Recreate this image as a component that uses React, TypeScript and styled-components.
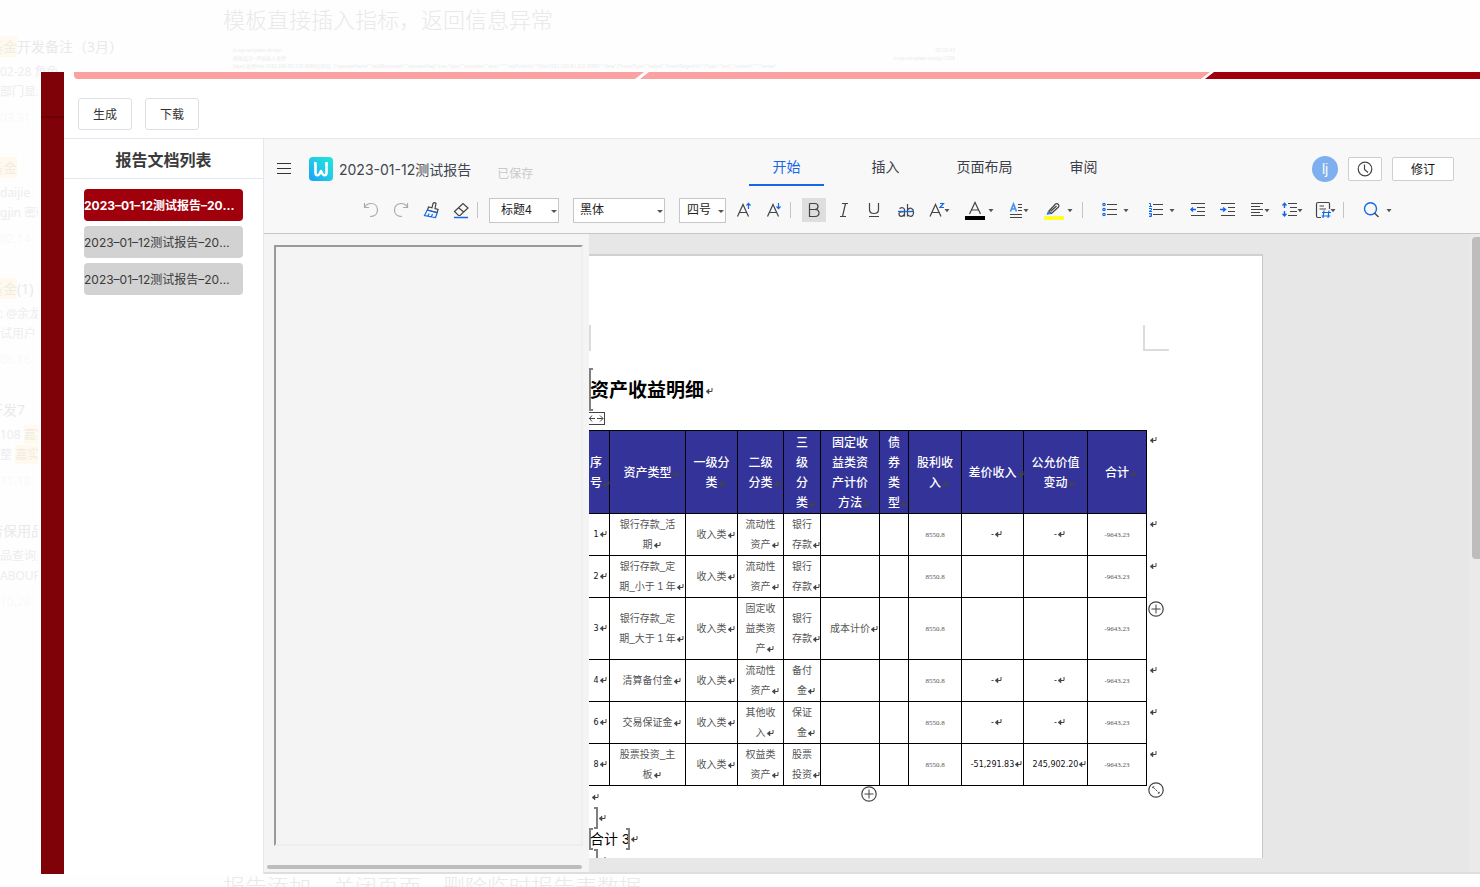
import React from 'react';
import styled, { createGlobalStyle, css } from 'styled-components';

const CJK = '"Noto Sans CJK SC"';
const INK = '#444';
const BLUE = '#1567e8';

const GlobalStyle = createGlobalStyle`
  *, *::before, *::after { box-sizing: border-box; }
  html, body { margin: 0; padding: 0; }
  body {
    background: #fefefe;
    color: #333;
    font-family: "Liberation Sans", ${CJK}, sans-serif;
    font-size: 12px;
  }
  button, select { font: inherit; color: inherit; margin: 0; padding: 0; }
  h1, h2, h3, p, ul { margin: 0; padding: 0; font-weight: normal; }
  ul { list-style: none; }
  svg { display: block; }
`;

/* ---------- notes app behind the window ---------- */

const Desktop = styled.div`
  position: relative;
  display: flex;
  height: 100vh;
  overflow: hidden;
`;

const NoteList = styled.ul`
  width: 173px;
  padding-top: 37px;
  font-family: "Noto Sans", ${CJK}, sans-serif;
  color: #ededf0;
  white-space: nowrap;
`;

const Note = styled.li`
  margin-bottom: 30px;
  line-height: 20px;
`;

const NoteTitle = styled.h3`
  margin-bottom: 5px;
  font-size: 14px;
  text-indent: -11px;
  color: #e9e9ec;
`;

const NoteDate = styled.p`
  margin-top: 6px;
  color: #f9f9fb;
`;

const Hit = styled.mark`
  padding: 1px 0;
  background: #fff9ee;
  color: #f0ece6;
`;

const NoteBody = styled.main`
  flex: 1;
  display: flex;
  flex-direction: column;
  justify-content: space-between;
  padding-left: 50px;
  white-space: nowrap;
`;

const NoteHeading = styled.h2`
  font-size: 22px;
  line-height: 28px;
  padding-top: 7px;
  font-weight: 300;
  color: #e9e9e9;
`;

const NotePreview = styled.div`
  width: 732px;
  padding: 11px 0 0 10px;
  overflow: hidden;
  font-size: 5px;
  line-height: 8px;
  color: #ececec;
`;

const PreviewLine = styled.p`
  display: flex;
  justify-content: space-between;
`;

const NoteFooting = styled(NoteHeading)`
  padding: 0;
  margin-bottom: -15px;
`;

/* ---------- report window ---------- */

const Window = styled.div`
  position: absolute;
  inset: 72px 0 13px 38px;
  display: flex;
  border-left: 3px solid #fff;
  background: #fff;
`;

const Rail = styled.div`
  width: 23px;
  background: #7f0208;
  border-top: 44px solid #7f0208;
  box-shadow: inset 0 2px 0 #6a0006;
`;

const Shell = styled.div`
  flex: 1;
  min-width: 0;
  display: flex;
  flex-direction: column;
`;

const Steps = styled.div`
  display: flex;
  height: 7px;
  padding-left: 10px;
`;

const Step = styled.div<{ $kind: 'first' | 'middle' | 'last' }>`
  ${({ $kind }) =>
    $kind === 'first'
      ? css`
          flex: 0 0 570px;
          border-bottom-left-radius: 4px;
          background: #fba1a1;
          clip-path: polygon(0 0, 100% 0, calc(100% - 9px) 100%, 0 100%);
        `
      : $kind === 'middle'
      ? css`
          flex: 0 0 570px;
          margin-left: -4px;
          background: #fba1a1;
          clip-path: polygon(9px 0, 100% 0, calc(100% - 9px) 100%, 0 100%);
        `
      : css`
          flex: 1;
          margin-left: -5px;
          background: #a0000b;
          clip-path: polygon(9px 0, 100% 0, 100% 100%, 0 100%);
        `}
`;

const Actions = styled.div`
  display: flex;
  gap: 13px;
  padding: 19px 14px 8px;
  border-bottom: 1px solid #e6e6f0;
`;

const ActionButton = styled.button`
  width: 54px;
  height: 32px;
  padding-bottom: 2px;
  border: 1px solid #dedfe3;
  border-radius: 3px;
  background: #fff;
  color: #333;
`;

const Work = styled.div`
  flex: 1;
  min-height: 0;
  display: flex;
`;

const Sidebar = styled.nav`
  width: 200px;
  flex: none;
  border-right: 1px solid #e6e6f0;
`;

const SidebarTitle = styled.h2`
  height: 40px;
  line-height: 43px;
  border-bottom: 1px solid #e6e6f0;
  text-align: center;
  font-size: 16px;
  font-weight: 700;
  color: #3a3a3a;
`;

const Docs = styled.ul`
  display: flex;
  flex-direction: column;
  gap: 5px;
  padding: 10px 20px;
`;

const DocButton = styled.button<{ $active?: boolean }>`
  display: block;
  width: 159px;
  height: 32px;
  padding: 0 7px 2px 0;
  overflow: hidden;
  text-overflow: ellipsis;
  white-space: nowrap;
  text-align: left;
  border: 0;
  border-radius: 4px;
  font-family: Inter, ${CJK}, sans-serif;
  font-weight: ${({ $active }) => ($active ? 700 : 400)};
  background: ${({ $active }) => ($active ? '#a0000b' : '#d2d2d2')};
  color: ${({ $active }) => ($active ? '#fff' : '#3a3a3a')};
`;

/* ---------- editor ---------- */

const Editor = styled.section`
  flex: 1;
  min-width: 0;
  display: flex;
  flex-direction: column;
  border-bottom: 2px solid #dedede;
  background: #e5e5e5;
`;

const EditorHead = styled.header`
  height: 95px;
  flex: none;
  border-bottom: 1px solid #c6c6c6;
  background: #f8f8f8;
`;

const TitleRow = styled.div`
  display: flex;
  align-items: center;
  height: 59px;
  padding-right: 26px;
`;

const TitleGroup = styled.div`
  width: 485px;
  display: flex;
  align-items: center;
  padding-left: 13px;
`;

const MenuButton = styled.button`
  width: 14px;
  height: 14px;
  margin-right: 18px;
  border: 0;
  background: none;
`;

const DocTitle = styled.h1`
  margin: 0 26px 0 6px;
  padding-top: 2px;
  font-family: Inter, ${CJK}, sans-serif;
  font-size: 14px;
  line-height: 20px;
  color: #40454f;
`;

const Saved = styled.span`
  padding-top: 8px;
  color: #c9c9c9;
`;

const Tabs = styled.nav`
  display: flex;
  gap: 24px;
  align-self: flex-start;
`;

const Tab = styled.button<{ $active?: boolean }>`
  width: 75px;
  height: 47px;
  padding-top: 8px;
  border: 0;
  border-bottom: 2px solid ${({ $active }) => ($active ? BLUE : 'transparent')};
  background: none;
  font-size: 14px;
  color: ${({ $active }) => ($active ? BLUE : '#3c4048')};
`;

const UserGroup = styled.div`
  margin-left: auto;
  display: flex;
  align-items: center;
  gap: 10px;
`;

const Avatar = styled.span`
  width: 26px;
  height: 26px;
  border-radius: 50%;
  background: #7eafee;
  color: #fff;
  font-size: 14px;
  line-height: 26px;
  text-align: center;
`;

const HeadButton = styled.button<{ $w: number }>`
  display: flex;
  align-items: center;
  justify-content: center;
  width: ${({ $w }) => $w}px;
  height: 24px;
  border: 1px solid #cfcfcf;
  border-radius: 2px;
  background: #fff;
  color: #111;
`;

const Ribbon = styled.div`
  display: flex;
  align-items: center;
  height: 24px;
  padding-left: 92px;
`;

const Tool = styled.button<{ $w?: number; $on?: boolean }>`
  flex: none;
  width: ${({ $w = 24 }) => $w}px;
  height: 24px;
  margin: 0 3px;
  border: 0;
  background: ${({ $on }) => ($on ? '#dedede' : 'none')};
`;

const Divider = styled.span`
  flex: none;
  width: 1px;
  height: 16px;
  margin: 0 8px 0 1px;
  background: #c4c4c4;
`;

const Pickers = styled.div`
  display: flex;
  gap: 14px;
  margin: 0 3px;
`;

const Picker = styled.label<{ $w: number }>`
  position: relative;
  flex: none;
  width: ${({ $w }) => $w}px;
  height: 25px;
`;

const PickerSelect = styled.select<{ $pad: number }>`
  appearance: none;
  width: 100%;
  height: 100%;
  padding-left: ${({ $pad }) => $pad}px;
  border: 1px solid #c6c6c6;
  border-radius: 0;
  background: #fff;
  color: #222;
`;

const PickerArrow = styled.span`
  position: absolute;
  right: 2px;
  top: 12px;
  border: 3px solid transparent;
  border-top-color: #555;
  pointer-events: none;
`;

/* ---------- document area ---------- */

const Body = styled.div`
  flex: 1;
  min-height: 0;
  display: flex;
  background: #e7e7e7;
`;

const Outline = styled.aside`
  width: 325px;
  flex: none;
  display: flex;
  flex-direction: column;
  gap: 19px;
  padding: 11px 6px 3px 3px;
  background: #f4f4f4;
`;

const OutlineFrame = styled.div`
  flex: 1;
  margin-left: 7px;
  border: 2px solid;
  border-color: #9a9a9a #eee #eee #9a9a9a;
`;

const HorizontalThumb = styled.div`
  height: 4px;
  width: 315px;
  border-radius: 2px;
  background: #bdbdbd;
`;

const Canvas = styled.div`
  flex: 1;
  min-width: 0;
  margin-bottom: 14px;
  padding-top: 20px;
  overflow: hidden;
`;

const VerticalTrack = styled.div`
  width: 10px;
  flex: none;
  padding: 3px 0 0 2px;
  background: #eaeaea;
`;

const VerticalThumb = styled.div`
  height: 322px;
  border-radius: 4px 0 0 4px;
  background: #bdbdbd;
`;

const Sheet = styled.article`
  width: 674px;
  height: 900px;
  padding-top: 69px;
  border-top: 2px solid #d0d0d0;
  border-right: 1px solid #c6c6c6;
  background: #fff;
  color: #000;
`;

const Corners = styled.div`
  display: flex;
  justify-content: space-between;
  width: 580px;
  height: 26px;
`;

const Corner = styled.span<{ $right?: boolean }>`
  width: ${({ $right }) => ($right ? 26 : 2)}px;
  border-left: 2px solid #dcdcdc;
  border-bottom: ${({ $right }) => ($right ? '2px solid #dcdcdc' : '0')};
`;

const Heading = styled.h2`
  display: flex;
  align-items: center;
  gap: 1px;
  height: 43px;
  margin-top: 17px;
  font-size: 19px;
  font-weight: 700;

  svg { margin-top: 4px; }
`;

const Bracket = styled.span<{ $side: 'left' | 'right'; $h: number }>`
  flex: none;
  width: 4px;
  height: ${({ $h }) => $h}px;
  border: 2px solid #808080;
  border-${({ $side }) => ($side === 'left' ? 'right' : 'left')}: 0;
`;

const HeadingText = styled.span`
  margin-left: -4px;
  padding-bottom: 2px;
`;

const WidthHandle = styled.button`
  display: block;
  width: 16px;
  height: 13px;
  margin: 1px 0 5px;
  border: 1px solid #444;
  border-left: 0;
  background: #fff;
`;

const TableBox = styled.div`
  position: relative;
`;

const Table = styled.table`
  table-layout: fixed;
  width: 579px;
  border-collapse: separate;
  border-spacing: 0;
  font-size: 10px;
  line-height: 20px;
  text-align: center;
  color: #555;
`;

const cell = css<{ $first?: boolean }>`
  padding: 1px ${({ $first }) => ($first ? 6 : 0)}px 0 0;
  border-right: 1px solid #000;
  border-bottom: 1px solid #000;
  white-space: nowrap;
  overflow: visible;
`;

const Th = styled.th<{ $first?: boolean }>`
  ${cell}
  padding-top: 2px;
  border-top: 1px solid #000;
  background: #333399;
  color: #fff;
  font-size: 12px;
  font-weight: 500;
`;

const Td = styled.td<{ $first?: boolean; $kind?: 'index' | 'small' | 'amount' }>`
  ${cell}
  ${({ $kind }) =>
    $kind === 'small' &&
    css`
      font-family: "Liberation Serif", serif;
      font-size: 7px;
    `}
  ${({ $kind }) =>
    ($kind === 'index' || $kind === 'amount') &&
    css`
      font-family: "DejaVu Sans", sans-serif;
      font-size: 8px;
      color: #111;
    `}
`;

const RowEnd = styled.td<{ $handle?: boolean }>`
  padding: ${({ $handle }) => ($handle ? '3px 0 0 1px' : '7px 0 0 2px')};
  vertical-align: top;
`;

const MarkBox = styled.span`
  display: inline-block;
  width: 0;
  height: 7px;
  vertical-align: -1px;
`;

const Handle = styled.button`
  display: block;
  width: 16px;
  height: 16px;
  border: 0;
  background: none;
`;

const AddColumn = styled(Handle)`
  position: absolute;
  left: 272px;
  top: 100%;
`;

const ResizeTable = styled(Handle)`
  position: absolute;
  left: 559px;
  top: calc(100% - 4px);
`;

const Line = styled.p<{ $h: number; $pad?: number }>`
  display: flex;
  align-items: center;
  height: ${({ $h }) => $h}px;
  padding-left: ${({ $pad = 0 }) => $pad}px;
  font-size: 14px;
  line-height: 20px;

  svg { margin-top: 2px; }
`;

const TotalText = styled.span`
  margin: 0 -4px 0 -3px;
`;

/* ---------- drawings ---------- */

const ReturnIcon = ({ color = '#444' }: { color?: string }) => (
  <svg width="8" height="7" viewBox="0 0 8 7" fill="none" stroke={color} overflow="visible">
    <path d="M7 0V3.500H3.500" />
    <path d="M1 3.500L4 1V6Z" fill={color} strokeWidth="0.500" />
  </svg>
);

const Mark = ({ color }: { color?: string }) => (
  <MarkBox>
    <ReturnIcon color={color} />
  </MarkBox>
);

const PlusCircle = () => (
  <svg width="16" height="16" viewBox="0 0 16 16" fill="#fff" stroke="#444">
    <circle cx="8" cy="8" r="7.200" strokeWidth="1.200" />
    <path d="M3.500 8H12.500M8 3.500V12.500" />
  </svg>
);

const ResizeCircle = () => (
  <svg width="16" height="16" viewBox="0 0 16 16" fill="#fff" stroke="#444">
    <circle cx="8" cy="8" r="7.200" strokeWidth="1.200" />
    <path d="M5 5L11 11" strokeDasharray="2.500 1" />
    <path d="M4.800 6.200V4.800H6.200M9.800 11.200H11.200V9.800" />
  </svg>
);

const Logo = () => (
  <svg width="24" height="24" viewBox="0 0 24 24" fill="none">
    <defs>
      <linearGradient id="logo" x1="0" y1="1" x2="1" y2="0">
        <stop offset="0" stopColor="#1b9ffb" />
        <stop offset="0.500" stopColor="#1fcbe6" />
        <stop offset="1" stopColor="#22e6d8" />
      </linearGradient>
    </defs>
    <rect width="24" height="24" rx="4" fill="url(#logo)" />
    <path d="M5 6.200H6.500V15.500Q6.500 18.300 8.500 18.300Q10.200 18.300 12 14Q13.800 18.300 15.500 18.300Q17.500 18.300 17.500 15.500V5" stroke="#fff" strokeWidth="2.600" strokeLinejoin="round" />
  </svg>
);

const Art = ({ w = 24, caret, children }: { w?: number; caret?: number; children: React.ReactNode }) => (
  <svg width={w} height="24" viewBox={`0 0 ${w} 24`} fill="none" stroke={INK} strokeWidth="1.200">
    {children}
    {caret !== undefined && <path d={`M${caret - 2.5} 11h5l-2.500 3.200z`} fill="#555" stroke="none" />}
  </svg>
);

const Select = ({ label, value, w, pad }: { label: string; value: string; w: number; pad: number }) => (
  <Picker $w={w}>
    <PickerSelect aria-label={label} defaultValue={value} $pad={pad}>
      <option>{value}</option>
    </PickerSelect>
    <PickerArrow />
  </Picker>
);

const RibbonBar = () => (
  <Ribbon>
    <Tool aria-label="撤销">
      <Art>
        <g stroke="#aaa">
          <path d="M5.500 5V9.500H10" />
          <path d="M5.500 9.500C7 6.500 9.500 5.500 12 5.500C16 5.500 18.500 8.300 18.500 12C18.500 16 15.500 18.500 11 18.500" />
        </g>
      </Art>
    </Tool>
    <Tool aria-label="恢复">
      <Art>
        <g stroke="#aaa">
          <path d="M18.500 5V9.500H14" />
          <path d="M18.500 9.500C17 6.500 14.500 5.500 12 5.500C8 5.500 5.500 8.300 5.500 12C5.500 16 8.500 18.500 13 18.500" />
        </g>
      </Art>
    </Tool>
    <Tool aria-label="格式刷">
      <Art>
        <path d="M8.500 12L9.500 9L13 9.800L14 5.500Q15.500 3.800 17 5.500L16 10.500L19 11.500L18.200 14.500Z" />
        <path d="M8.300 12L18.200 14.800L16.500 19.500L5.500 17.500L8.300 12M9 18L10.200 15.500M12.500 18.500L13.500 16" stroke={BLUE} />
      </Art>
    </Tool>
    <Tool aria-label="清除格式">
      <Art>
        <path d="M5.500 13.500L14 5.500L19 10L11 17.500H9.500ZM9.500 9.700L14.700 14" />
        <path d="M5 19.500H19" stroke={BLUE} strokeWidth="1.500" />
      </Art>
    </Tool>
    <Divider />
    <Pickers>
      <Select label="样式" value="标题4" w={70} pad={11} />
      <Select label="字体" value="黑体" w={92} pad={6} />
      <Select label="字号" value="四号" w={47} pad={7} />
    </Pickers>
    <Tool aria-label="增大字号">
      <Art>
        <path d="M5.500 18.500L11 6.500L16.500 18.500M7.500 14.500H14.500" />
        <path d="M16.500 11V5.500M14.500 7.500L16.500 5.300L18.500 7.500" stroke={BLUE} />
      </Art>
    </Tool>
    <Tool aria-label="减小字号">
      <Art>
        <path d="M5.500 18.500L11 6.500L16.500 18.500M7.500 14.500H14.500" />
        <path d="M16.500 5V10.500M14.500 8.500L16.500 10.700L18.500 8.500" stroke={BLUE} />
      </Art>
    </Tool>
    <Divider />
    <Tool aria-label="加粗" $on>
      <Art>
        <path d="M7.500 5.500H13Q16 5.500 16 8.500Q16 11.500 13 11.500H7.500M13 11.500Q17 11.500 17 15Q17 18.500 13 18.500H7.500V5.500" />
      </Art>
    </Tool>
    <Tool aria-label="倾斜">
      <Art>
        <path d="M10 5.500H16M8 18.500H14M13.500 5.500L10.500 18.500" />
      </Art>
    </Tool>
    <Tool aria-label="下划线">
      <Art>
        <path d="M7.500 5V11.500Q7.500 15.500 12 15.500Q16.500 15.500 16.500 11.500V5M7 18.500H17" />
      </Art>
    </Tool>
    <Tool aria-label="删除线">
      <Art>
        <path d="M7.500 10.500Q11.500 8.500 12.500 11.500V18.500M12.500 13.500Q7 13.500 7 16Q7 18.300 9.500 18.300Q12 18.300 12.500 16M15.500 6V18.500M15.500 12Q17 9.800 19 10.200Q21.500 11 21.500 14.200Q21.500 18.300 18.500 18.300Q16.500 18.300 15.500 16.500" />
        <path d="M6 13.500H22" stroke={BLUE} strokeWidth="1.400" />
      </Art>
    </Tool>
    <Tool aria-label="上标" $w={33}>
      <Art w={33} caret={25}>
        <path d="M8 18.500L13.500 6.500L19 18.500M10 14.500H17" />
        <path d="M18 5.500H21.500L18 9.500H22" stroke={BLUE} />
      </Art>
    </Tool>
    <Tool aria-label="字体颜色" $w={36}>
      <Art w={36} caret={30}>
        <path d="M8.500 16L14 4.500L19.500 16M10.500 12H17.500" />
        <rect x="4" y="18" width="20" height="4" fill="#000" stroke="none" />
      </Art>
    </Tool>
    <Tool aria-label="文字效果" $w={30}>
      <Art w={30} caret={23}>
        <path d="M7.500 13.500L10.500 6L13.500 13.500M8.500 11H12.500" stroke="#4a90f5" strokeWidth="1.700" />
        <path d="M15 6.500H19M15 9.500H19M15 12.500H19M7 16.500H19M7 19.500H19" />
      </Art>
    </Tool>
    <Tool aria-label="突出显示" $w={39}>
      <Art w={39} caret={31}>
        <path d="M9.500 13.500L16.500 6Q18 5 19.500 6.500Q20.500 8 19.500 9L12.500 15.500L9.500 13.500M11.500 13.500L17.500 8" />
        <path d="M9.500 13.500L8.500 16L12 15.500" stroke={BLUE} />
        <rect x="5" y="18" width="20" height="4" fill="#ffff2d" stroke="none" />
      </Art>
    </Tool>
    <Divider />
    <Tool aria-label="项目符号" $w={40}>
      <Art w={40} caret={32}>
        <path d="M13 6.500H23M13 11.500H23M13 16.500H23" />
        <g stroke={BLUE}>
          <circle cx="10" cy="6.500" r="1.200" />
          <circle cx="10" cy="11.500" r="1.200" />
          <circle cx="10" cy="16.500" r="1.200" />
        </g>
      </Art>
    </Tool>
    <Tool aria-label="编号" $w={40}>
      <Art w={40} caret={32}>
        <path d="M13 6.500H23M13 11.500H23M13 16.500H23" />
        <path d="M9 5.500H10.500V8.500M9 8.500H12M9 10.500H11.500V12L9 13.500H12M9 15.500H11.500V18.500H9M9.500 17H11.500" stroke={BLUE} strokeWidth="1" />
      </Art>
    </Tool>
    <Tool aria-label="减少缩进">
      <Art>
        <path d="M5 5.500H19M11 9.500H19M11 13.500H19M5 17.500H19" />
        <path d="M10 11.500H5M7 9.500L5 11.500L7 13.500" stroke={BLUE} strokeWidth="1.500" />
      </Art>
    </Tool>
    <Tool aria-label="增加缩进">
      <Art>
        <path d="M5 5.500H19M12 9.500H19M12 13.500H19M5 17.500H19" />
        <path d="M4 11.500H9M7 9.500L9.500 11.500L7 13.500" stroke={BLUE} strokeWidth="1.500" />
      </Art>
    </Tool>
    <Tool aria-label="对齐方式" $w={26}>
      <Art w={26} caret={21}>
        <path d="M5 5.500H17M5 8.500H14M5 11.500H17M5 14.500H14M5 17.500H17" />
      </Art>
    </Tool>
    <Tool aria-label="行距" $w={28}>
      <Art w={28} caret={22}>
        <path d="M10 5.500H19M12 9.500H19M12 13.500H19M10 17.500H19" />
        <path d="M6.500 5.500V10M4.500 7.500L6.500 5.300L8.500 7.500M6.500 13V17.500M4.500 15.700L6.500 18L8.500 15.700" stroke={BLUE} strokeWidth="1.400" />
      </Art>
    </Tool>
    <Tool aria-label="页码" $w={27}>
      <Art w={27} caret={21}>
        <path d="M9 19.500H6Q4.500 19.500 4.500 18V6Q4.500 4.500 6 4.500H16.500Q17.500 4.500 17.500 6V11M7.500 8H12M7.500 11H14" />
        <path d="M12 12.500L11 20M17 12.500L16 20M10 14.500H19M9.500 18H18.500" stroke={BLUE} />
      </Art>
    </Tool>
    <Divider />
    <Tool aria-label="查找" $w={40}>
      <Art w={40} caret={34}>
        <circle cx="15.500" cy="10.800" r="6" stroke={BLUE} strokeWidth="1.400" />
        <path d="M19.500 15L23.500 19" strokeWidth="1.500" />
      </Art>
    </Tool>
  </Ribbon>
);

/* ---------- data ---------- */

const columnWidths = [21, 76, 52, 46, 37, 59, 29, 53, 62, 64, 59, 21];

const headers = [
  ['序', '号'],
  ['资产类型'],
  ['一级分', '类'],
  ['二级', '分类'],
  ['三', '级', '分', '类'],
  ['固定收', '益类资', '产计价', '方法'],
  ['债', '券', '类', '型'],
  ['股利收', '入'],
  ['差价收入'],
  ['公允价值', '变动'],
  ['合计'],
];

interface Asset {
  id: string;
  name: string[];
  second: string[];
  third: string[];
  method?: string;
  spread?: string;
  fair?: string;
  height: number;
}

const assets: Asset[] = [
  { id: '1', name: ['银行存款_活', '期'], second: ['流动性', '资产'], third: ['银行', '存款'], spread: '-', fair: '-', height: 42 },
  { id: '2', name: ['银行存款_定', '期_小于 1 年'], second: ['流动性', '资产'], third: ['银行', '存款'], height: 42 },
  { id: '3', name: ['银行存款_定', '期_大于 1 年'], second: ['固定收', '益类资', '产'], third: ['银行', '存款'], method: '成本计价', height: 62 },
  { id: '4', name: ['清算备付金'], second: ['流动性', '资产'], third: ['备付', '金'], spread: '-', fair: '-', height: 42 },
  { id: '6', name: ['交易保证金'], second: ['其他收', '入'], third: ['保证', '金'], spread: '-', fair: '-', height: 42 },
  { id: '8', name: ['股票投资_主', '板'], second: ['权益类', '资产'], third: ['股票', '投资'], spread: '-51,291.83', fair: '245,902.20', height: 42 },
];

const HeaderRow = styled.tr`
  height: 84px;
`;

const Row = styled.tr<{ $h: number }>`
  height: ${({ $h }) => $h}px;
`;

const Lines = ({ of, mark }: { of: string[]; mark?: string }) => (
  <>
    {of.map((text, i) => (
      <React.Fragment key={i}>
        {i > 0 && <br />}
        {text}
      </React.Fragment>
    ))}
    <Mark color={mark} />
  </>
);

const AssetTable = () => (
  <TableBox>
    <Table>
      <colgroup>
        {columnWidths.map((w, i) => (
          <col key={i} width={w} />
        ))}
      </colgroup>
      <thead>
        <HeaderRow>
          {headers.map((h, i) => (
            <Th key={i} $first={i === 0}>
              <Lines of={h} mark="#444" />
            </Th>
          ))}
          <RowEnd>
            <ReturnIcon />
          </RowEnd>
        </HeaderRow>
      </thead>
      <tbody>
        {assets.map((a) => (
          <Row key={a.id} $h={a.height}>
            <Td $first $kind="index">
              <Lines of={[a.id]} />
            </Td>
            <Td><Lines of={a.name} /></Td>
            <Td><Lines of={['收入类']} /></Td>
            <Td><Lines of={a.second} /></Td>
            <Td><Lines of={a.third} /></Td>
            <Td>{a.method && <Lines of={[a.method]} />}</Td>
            <Td />
            <Td $kind="small">8550.8</Td>
            <Td $kind="amount">{a.spread && <Lines of={[a.spread]} />}</Td>
            <Td $kind="amount">{a.fair && <Lines of={[a.fair]} />}</Td>
            <Td $kind="small">-9643.23</Td>
            <RowEnd $handle={a.id === '3'}>
              {a.id === '3' ? (
                <Handle aria-label="添加行">
                  <PlusCircle />
                </Handle>
              ) : (
                <ReturnIcon />
              )}
            </RowEnd>
          </Row>
        ))}
      </tbody>
    </Table>
    <AddColumn aria-label="添加列">
      <PlusCircle />
    </AddColumn>
    <ResizeTable aria-label="调整表格大小">
      <ResizeCircle />
    </ResizeTable>
  </TableBox>
);

const docs = ['2023–01–12测试报告–2023–01–12', '2023–01–12测试报告–2023–01–11', '2023–01–12测试报告–2023–01–10'];

export default function App() {
  return (
    <>
      <GlobalStyle />
      <Desktop>
        <NoteList>
          <Note>
            <NoteTitle><Hit>基金</Hit>开发备注（3月）</NoteTitle>
            <p>02-28 角色</p>
            <p>部门显示</p>
            <NoteDate>03.31</NoteDate>
          </Note>
          <Note>
            <NoteTitle><Hit>基金</Hit></NoteTitle>
            <p>daijie</p>
            <p>gjin 密码</p>
            <NoteDate>02.14</NoteDate>
          </Note>
          <Note>
            <NoteTitle><Hit>基金</Hit>(1)</NoteTitle>
            <p>: @余龙</p>
            <p>试用户</p>
            <NoteDate>08.16</NoteDate>
          </Note>
          <Note>
            <NoteTitle>开发7</NoteTitle>
            <p>108 <Hit>嘉实</Hit></p>
            <p>整 <Hit>嘉实</Hit></p>
            <NoteDate>11.18</NoteDate>
          </Note>
          <Note>
            <NoteTitle>劳保用品</NoteTitle>
            <p>品查询页</p>
            <p>ABOUR</p>
            <NoteDate>10.28</NoteDate>
          </Note>
        </NoteList>
        <NoteBody>
          <div>
            <NoteHeading>模板直接插入指标，返回信息异常</NoteHeading>
            <NotePreview>
              <PreviewLine>
                <span>lc-wp-template-design</span>
                <span>00:26:43</span>
              </PreviewLine>
              <PreviewLine>
                <span>模板设计--开始插入事件</span>
                <span>lc-wp-template-design:1358</span>
              </PreviewLine>
              <PreviewLine>
                {'[wps] 收到http://192.168.80.216:8080的消息: {"operateName":"addBookmark","operateFlag":true,"type":"template","desc":"","wpPostInfo":"http://192.168.80.216:8080/","data":{"insertType":"target","insertTargetInfo":{"type":"text","content":"","series"'}
              </PreviewLine>
            </NotePreview>
          </div>
          <NoteFooting>报告添加、关闭页面、删除临时报告表数据</NoteFooting>
        </NoteBody>

        <Window>
          <Rail />
          <Shell>
            <Steps>
              <Step $kind="first" />
              <Step $kind="middle" />
              <Step $kind="last" />
            </Steps>
            <Actions>
              <ActionButton>生成</ActionButton>
              <ActionButton>下载</ActionButton>
            </Actions>
            <Work>
              <Sidebar>
                <SidebarTitle>报告文档列表</SidebarTitle>
                <Docs>
                  {docs.map((name, i) => (
                    <li key={name}>
                      <DocButton $active={i === 0}>{name}</DocButton>
                    </li>
                  ))}
                </Docs>
              </Sidebar>
              <Editor>
                <EditorHead>
                  <TitleRow>
                    <TitleGroup>
                      <MenuButton aria-label="菜单">
                        <svg width="14" height="14" viewBox="0 0 14 14" stroke="#333">
                          <path d="M0 1.500H14M0 6.500H14M0 11.500H14" />
                        </svg>
                      </MenuButton>
                      <Logo />
                      <DocTitle>2023-01-12测试报告</DocTitle>
                      <Saved>已保存</Saved>
                    </TitleGroup>
                    <Tabs>
                      <Tab $active>开始</Tab>
                      <Tab>插入</Tab>
                      <Tab>页面布局</Tab>
                      <Tab>审阅</Tab>
                    </Tabs>
                    <UserGroup>
                      <Avatar>lj</Avatar>
                      <HeadButton $w={34} aria-label="历史版本">
                        <svg width="16" height="16" viewBox="0 0 16 16" fill="none" stroke="#444" strokeWidth="1.200">
                          <circle cx="8" cy="8" r="6.800" />
                          <path d="M7.500 3.500V8.500L11 11.500" />
                        </svg>
                      </HeadButton>
                      <HeadButton $w={62}>修订</HeadButton>
                    </UserGroup>
                  </TitleRow>
                  <RibbonBar />
                </EditorHead>
                <Body>
                  <Outline>
                    <OutlineFrame />
                    <HorizontalThumb />
                  </Outline>
                  <Canvas>
                    <Sheet>
                      <Corners>
                        <Corner />
                        <Corner $right />
                      </Corners>
                      <Heading>
                        <Bracket $side="left" $h={43} />
                        <HeadingText>资产收益明细</HeadingText>
                        <ReturnIcon />
                      </Heading>
                      <WidthHandle aria-label="列宽">
                        <svg width="15" height="11" viewBox="0 0 15 11" fill="none" stroke="#444">
                          <path d="M0 5.500H6M3 2.500L0.500 5.500L3 8.500M8 5.500H14M11 2.500L14 5.500L11 8.500" />
                        </svg>
                      </WidthHandle>
                      <AssetTable />
                      <Line $h={21} $pad={2}>
                        <ReturnIcon />
                      </Line>
                      <Line $h={21} $pad={5}>
                        <Bracket $side="right" $h={22} />
                        <ReturnIcon />
                      </Line>
                      <Line $h={21}>
                        <Bracket $side="left" $h={22} />
                        <TotalText>合计 3</TotalText>
                        <Bracket $side="right" $h={22} />
                        <ReturnIcon />
                      </Line>
                      <Line $h={21} $pad={5}>
                        <Bracket $side="right" $h={22} />
                        <ReturnIcon />
                      </Line>
                    </Sheet>
                  </Canvas>
                  <VerticalTrack>
                    <VerticalThumb />
                  </VerticalTrack>
                </Body>
              </Editor>
            </Work>
          </Shell>
        </Window>
      </Desktop>
    </>
  );
}
